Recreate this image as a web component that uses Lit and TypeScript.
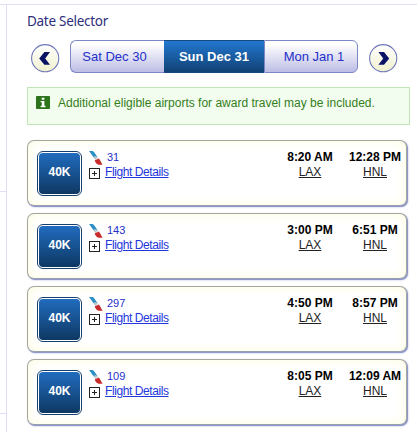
import { LitElement, html, css, svg } from "lit";
import { customElement, property } from "lit/decorators.js";

@customElement("nav-arrow")
class NavArrow extends LitElement {
  static styles = css`
    :host { display: block; width: 29px; height: 29px; }
    svg { display: block; }
  `;
  @property() dir = "prev";
  render() {
    const prev = this.dir === "prev";
    return html`<svg width="29" height="29" viewBox="0 0 29 29">
      <defs><linearGradient id="g" x1="0" y1="0" x2="0" y2="1">
        <stop offset="0" stop-color="#fff"></stop><stop offset="1" stop-color="#f1f1cf"></stop>
      </linearGradient></defs>
      <circle cx="14.2" cy="14.2" r="13.6" fill="url(#g)" stroke="#7078bb" stroke-width="1.1"></circle>
      ${prev
        ? svg`<path d="M13.4 8.1H19L14.2 14.4L19 20.7H13.4L8.2 14.4Z" fill="#0b1365"></path>`
        : svg`<path d="M9.4 8.1H15L20.2 14.4L15 20.7H9.4L14.2 14.4Z" fill="#0b1365"></path>`}
    </svg>`;
  }
}

@customElement("flight-card")
class FlightCard extends LitElement {
  static styles = css`
    :host {
      display: flex; box-sizing: border-box; width: 380px; height: 66px;
      padding: 10px 0 0 9px; border: 1px solid #a5a69c; border-radius: 7px;
      border-bottom-color: #9a9fb0;
      background: #fff; color: #000;
      box-shadow: inset 0 0 9px 2px #fdfde6, 1px 1px 0 0 #8f98cb, 1px 1px 2px 0 #a9b0da;
      font: 12px/15px "Liberation Sans", Arial, sans-serif;
    }
    .award {
      box-sizing: border-box; width: 45px; height: 45px; flex: none;
      border: 1px solid #16416f; border-radius: 6px;
      padding: 1px; background: #fff;
    }
    .fill {
      height: 41px; width: 41px; border-radius: 4px;
      background: linear-gradient(#216cbe, #0e3863);
      color: #fff; font-weight: bold; text-align: center; line-height: 39px;
    }
    .info { width: 100px; margin: -1px 0 0 7px; color: #2430c8; flex: none; }
    .row { display: flex; height: 15px; align-items: center; }
    .details { height: 15px; }
    .num { margin-left: 4px; font-size: 11px; }
    .link { margin: -1px 0 0 5px; font-size: 12px; letter-spacing: -0.42px; color: #2336dc; text-decoration: underline; white-space: nowrap; }
    svg { display: block; flex: none; }
    .details svg { margin-top: 1px; }
    .time { width: 65px; flex: none; margin-top: -1px; text-align: center; white-space: nowrap; }
    .depart { margin-left: 88.5px; }
    .clock { font-weight: bold; }
    .code { color: #222; text-decoration: underline; }
  `;
  @property() num = "";
  @property() dep = "";
  @property() arr = "";
  render() {
    return html`
      <div class="award"><div class="fill">40K</div></div>
      <div class="info">
        <div class="row">
          <svg width="14" height="15" viewBox="0 0 14 15">
            <path d="M0 1H3.4Q4.6 1.2 5.3 2.5L8.8 7.6Q7 6.6 5.5 8.4Z" fill="#2b8fc6"></path>
            <path d="M4.7 6.8Q5.8 5.8 7.6 6.5L9 8.4Q6.6 8.2 6.3 9.8Z" fill="#bdc8ce"></path>
            <path d="M5.8 10.8Q6.2 9.2 7.8 9.4L10 8.6L13.6 14.7H9.6Q7.8 14.3 6.9 13Z" fill="#c92b2b"></path>
          </svg>
          <span class="num">${this.num}</span>
        </div>
        <div class="row details">
          <svg width="11" height="11" viewBox="0 0 11 11">
            <rect x=".5" y=".5" width="10" height="10" fill="#fff" stroke="#222"></rect>
            <path d="M3 5.5H8M5.5 3V8" stroke="#222"></path>
          </svg>
          <span class="link">Flight Details</span>
        </div>
      </div>
      <div class="time depart"><div class="clock">${this.dep}</div><span class="code">LAX</span></div>
      <div class="time"><div class="clock">${this.arr}</div><span class="code">HNL</span></div>
    `;
  }
}

@customElement("app-root")
class AppRoot extends LitElement {
  static styles = css`
    :host {
      display: flex; width: 417px; height: 432px; overflow: hidden; background: #fff;
      font-family: "Liberation Sans", Arial, sans-serif;
    }
    .rail { box-sizing: border-box; width: 7px; height: 428px; margin-top: 4px; border-right: 1px solid #dfe0f7; border-top: 1px solid #dfe0f7; flex: none; }
    .cell { box-sizing: border-box; height: 187px; border-bottom: 1px solid #dfe0f7; }
    .cell.tall { height: 222px; }
    main { box-sizing: border-box; flex: 1; height: 428px; margin-top: 4px; border-top: 1px solid #dfe0f7; padding: 6px 0 0 20px; }
    h1 { margin: 0; height: 29px; font: 400 13.5px/21px "Noto Sans", "Open Sans", sans-serif; letter-spacing: -0.28px; color: #2f2f7c; }
    .dates { display: flex; height: 33px; }
    .dates nav-arrow { margin: 4px 10px 0 4px; }
    .dates nav-arrow[dir="next"] { margin: 4px 0 0 11px; }
    .tabs { display: flex; width: 288px; height: 33px; }
    .tab {
      box-sizing: border-box; border: 1px solid #7c87c4; text-align: center; line-height: 31px; font-size: 13px;
      color: #2430c8; background: linear-gradient(#fff 10%, #bdbde6); white-space: nowrap;
    }
    .first { width: 94px; padding-right: 6px; border-right: 0; border-radius: 6px 0 0 6px; }
    .active { width: 100px; border-color: #17497f; border-left-width: 0; border-right-width: 0; color: #fff; font-weight: bold; background: linear-gradient(#2277d0, #114274); }
    .last { width: 94px; padding-left: 6px; border-radius: 0 6px 6px 0; }
    .note {
      box-sizing: border-box; display: flex; width: 383px; height: 38px; margin: 14px 0 15px;
      border: 1px solid #c2e5b5; background: #f2fdf0; padding: 8px 0 0 8px;
      font-size: 12px; line-height: 15px; color: #357d21; white-space: nowrap;
    }
    .note svg { display: block; margin: 0 8px 0 0; width: 14px; }
    .list { display: flex; flex-direction: column; gap: 7px; }
  `;
  render() {
    const flights = [
      ["31", "8:20 AM", "12:28 PM"],
      ["143", "3:00 PM", "6:51 PM"],
      ["297", "4:50 PM", "8:57 PM"],
      ["109", "8:05 PM", "12:09 AM"],
    ];
    return html`
      <div class="rail"><div class="cell"></div><div class="cell tall"></div></div>
      <main>
        <h1>Date Selector</h1>
        <div class="dates">
          <nav-arrow dir="prev"></nav-arrow>
          <div class="tabs">
            <div class="tab first">Sat Dec 30</div>
            <div class="tab active">Sun Dec 31</div>
            <div class="tab last">Mon Jan 1</div>
          </div>
          <nav-arrow dir="next"></nav-arrow>
        </div>
        <div class="note">
          <svg width="14" height="13" viewBox="0 0 14 13">
            <rect width="14" height="13" rx="1" fill="#2c731c"></rect>
            <path d="M5.7 1.8H8.4V3.7H5.7ZM4.6 5H8.4V9.8H9.5V11.2H4.6V9.8H5.8V6.3H4.6Z" fill="#fff"></path>
          </svg>
          <span>Additional eligible airports for award travel may be included.</span>
        </div>
        <div class="list">
          ${flights.map(([n, d, a]) => html`<flight-card .num=${n} .dep=${d} .arr=${a}></flight-card>`)}
        </div>
      </main>
    `;
  }
}
